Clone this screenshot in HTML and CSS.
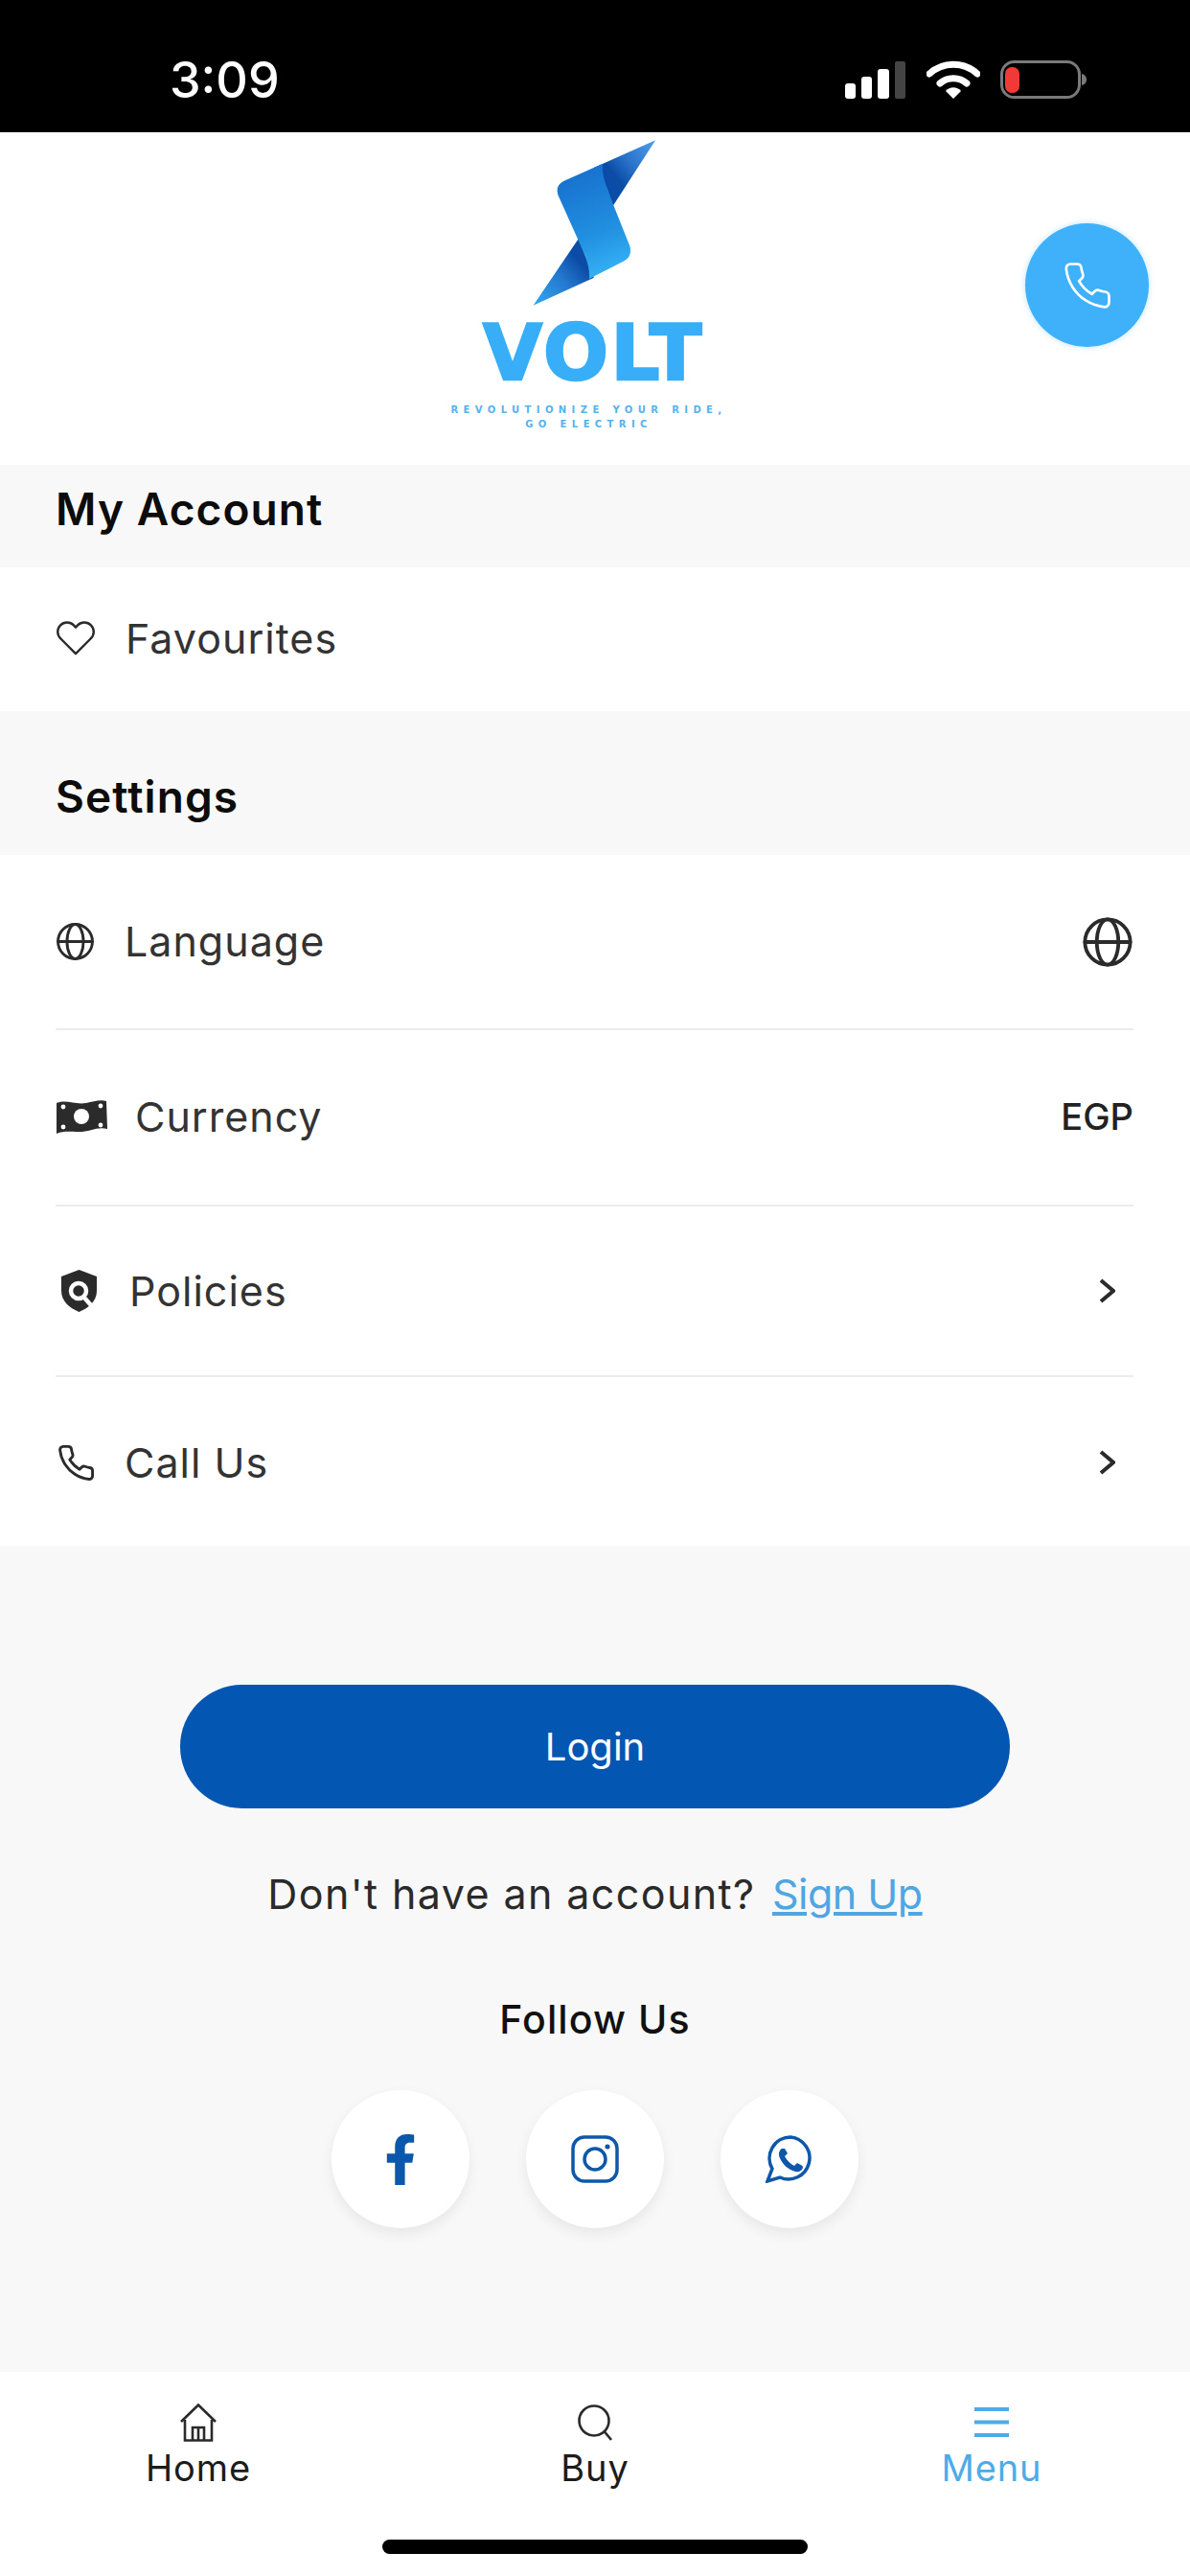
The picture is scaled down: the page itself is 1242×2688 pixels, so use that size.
FILE: index.html
```html
<!DOCTYPE html>
<html lang="en">
<head>
<meta charset="utf-8">
<title>Volt - Menu</title>
<link rel="stylesheet" href="styles.css">
</head>
<body>
<div class="app">
  <div class="status">
    <span class="time">3:09</span>
    <div class="status-icons">
      <svg class="ic-signal" viewBox="0 0 63 39"><rect x="0" y="23" width="11" height="16" rx="3" fill="#fff"/><rect x="17" y="16" width="11" height="23" rx="3" fill="#fff"/><rect x="34" y="8" width="12" height="31" rx="3" fill="#fff"/><rect x="52" y="0" width="11" height="39" rx="2" fill="#444"/></svg>
      <svg class="ic-wifi" viewBox="0 0 56 40"><path d="M3 14 C17 1 39 1 53 14" fill="none" stroke="#fff" stroke-width="7" stroke-linecap="round"/><path d="M14 24 C22 17 34 17 42 24" fill="none" stroke="#fff" stroke-width="7" stroke-linecap="round"/><path d="M20 32 C24 27 32 27 36 32 L28 40 Z" fill="#fff"/></svg>
      <svg class="ic-battery" viewBox="0 0 90 40"><rect x="1.5" y="1.5" width="81" height="37" rx="13" fill="none" stroke="#7a7a7a" stroke-width="3"/><rect x="5" y="7" width="15" height="27" rx="7" fill="#f03a35"/><path d="M85 14 C89 15 90 18 90 20 C90 22 89 25 85 26 Z" fill="#7a7a7a"/></svg>
    </div>
  </div>

  <header class="header">
    <div class="logo">
      <svg class="logo-mark" viewBox="340 40 410 540">
        <defs>
          <linearGradient id="wingTop" x1="733" y1="50" x2="585" y2="170" gradientUnits="userSpaceOnUse"><stop offset="0" stop-color="#4f9fe8"/><stop offset="0.55" stop-color="#2a74cc"/><stop offset="0.88" stop-color="#0b4da6"/><stop offset="1" stop-color="#0b4da6"/></linearGradient>
          <linearGradient id="wingBot" x1="350" y1="567" x2="520" y2="420" gradientUnits="userSpaceOnUse"><stop offset="0" stop-color="#34a8f2"/><stop offset="0.55" stop-color="#2478cf"/><stop offset="0.88" stop-color="#0b4da6"/><stop offset="1" stop-color="#0b4da6"/></linearGradient>
          <linearGradient id="band" x1="480" y1="170" x2="590" y2="460" gradientUnits="userSpaceOnUse"><stop offset="0" stop-color="#1874d0"/><stop offset="0.6" stop-color="#2190e0"/><stop offset="1" stop-color="#35b0f4"/></linearGradient>
        </defs>
        <path d="M540 136 L733 50 L600 255 L580 200 Z" fill="url(#wingTop)"/>
        <path d="M350 567 L492 358 L540 480 Z" fill="url(#wingBot)"/>
        <path d="M445 178 L568 123 C562 165 585 205 600 250 L652 380 Q662 412 635 428 L525 484 C530 440 505 395 490 360 L428 222 Q418 192 445 178 Z" fill="url(#band)"/>
      </svg>
      <div class="logo-name">VOLT</div>
      <div class="logo-tag">REVOLUTIONIZE YOUR RIDE,<br>GO ELECTRIC</div>
    </div>
    <button class="call-btn" type="button" aria-label="Call">
      <svg class="ic-call-white" viewBox="0 0 24 24"><path d="M22 16.92v3a2 2 0 0 1-2.18 2 19.79 19.79 0 0 1-8.63-3.07 19.5 19.5 0 0 1-6-6 19.79 19.79 0 0 1-3.07-8.67A2 2 0 0 1 4.11 2h3a2 2 0 0 1 2 1.72 12.84 12.84 0 0 0 .7 2.81 2 2 0 0 1-.45 2.11L8.09 9.91a16 16 0 0 0 6 6l1.27-1.27a2 2 0 0 1 2.11-.45 12.84 12.84 0 0 0 2.81.7A2 2 0 0 1 22 16.92z"/></svg>
    </button>
  </header>

  <h2 class="section-title title-account">My Account</h2>
  <div class="list">
    <div class="row row-fav">
      <svg class="ic-line ic-heart" viewBox="0 0 24 22"><path d="M21.2 3.1a5.6 5.6 0 0 0-8 0L12 4.4l-1.2-1.3a5.6 5.6 0 0 0-8 8l1.2 1.2 8 8 8-8 1.2-1.2a5.6 5.6 0 0 0 0-8z"/></svg>
      <span class="row-label gap-fav">Favourites</span>
    </div>
  </div>

  <h2 class="section-title title-settings">Settings</h2>
  <div class="list">
    <div class="row row-lang">
      <svg class="ic-line ic-globe" viewBox="0 0 24 24"><circle cx="12" cy="12" r="10.5"/><path d="M1.5 12h21"/><ellipse cx="12" cy="12" rx="5" ry="10.5"/></svg>
      <span class="row-label gap-lang">Language</span>
      <svg class="ic-line ic-globe-lg" viewBox="0 0 24 24"><circle cx="12" cy="12" r="10.5"/><path d="M1.5 12h21"/><ellipse cx="12" cy="12" rx="5" ry="10.5"/></svg>
    </div>
    <div class="row row-cur">
      <svg class="ic-cash" viewBox="0 0 54 37"><path d="M1 4 C12 0 20 6 32 4 C40 2 47 0 53 2 L54 31 C44 28 36 34 24 34 C14 34 8 33 1 36 Z" fill="#2b2b2b"/><circle cx="27" cy="18" r="8" fill="#fff"/><circle cx="8" cy="8" r="2.4" fill="#fff"/><circle cx="47" cy="7" r="2.4" fill="#fff"/><circle cx="8" cy="29" r="2.4" fill="#fff"/><circle cx="47" cy="27" r="2.4" fill="#fff"/></svg>
      <span class="row-label gap-cur">Currency</span>
      <span class="row-value">EGP</span>
    </div>
    <div class="row row-pol">
      <svg class="ic-shield" viewBox="0 0 39 44"><path d="M19.5 0 L38 7 L38 22 C38 33 29 40 19.5 44 C10 40 1 33 1 22 L1 7 Z" fill="#2b2b2b"/><circle cx="19" cy="22" r="8" fill="none" stroke="#fff" stroke-width="4.5"/><path d="M24 28 L32 37" stroke="#fff" stroke-width="4.5"/></svg>
      <span class="row-label gap-pol">Policies</span>
      <svg class="ic-chev" viewBox="0 0 17 26"><path d="M2 2 L15 13 L2 24"/></svg>
    </div>
    <div class="row row-call">
      <svg class="ic-line ic-phone" viewBox="0 0 24 24"><path d="M22 16.92v3a2 2 0 0 1-2.18 2 19.79 19.79 0 0 1-8.63-3.07 19.5 19.5 0 0 1-6-6 19.79 19.79 0 0 1-3.07-8.67A2 2 0 0 1 4.11 2h3a2 2 0 0 1 2 1.72 12.84 12.84 0 0 0 .7 2.81 2 2 0 0 1-.45 2.11L8.09 9.91a16 16 0 0 0 6 6l1.27-1.27a2 2 0 0 1 2.11-.45 12.84 12.84 0 0 0 2.81.7A2 2 0 0 1 22 16.92z"/></svg>
      <span class="row-label gap-call">Call Us</span>
      <svg class="ic-chev" viewBox="0 0 17 26"><path d="M2 2 L15 13 L2 24"/></svg>
    </div>
  </div>

  <main class="footer">
    <button class="login" type="button">Login</button>
    <p class="signup">Don't have an account? <a class="signup-link" href="#">Sign Up</a></p>
    <h3 class="follow">Follow Us</h3>
    <div class="socials">
      <div class="social">
        <svg class="ic-fb" viewBox="20 0 280 512"><path d="M279.14 288l14.22-92.66h-88.91v-60.13c0-25.35 12.42-50.06 52.24-50.06h40.42V6.26S260.43 0 225.36 0c-73.22 0-121.08 44.38-121.08 124.72v70.62H22.89V288h81.39v224h100.17V288z"/></svg>
      </div>
      <div class="social">
        <svg class="ic-social" viewBox="0 0 50 50"><rect x="2" y="2" width="46" height="46" rx="12"/><circle cx="25" cy="25" r="11"/><circle class="dot" cx="38" cy="12" r="2.6"/></svg>
      </div>
      <div class="social">
        <svg class="ic-social" viewBox="0 0 50 50"><path d="M26 2 A22 22 0 0 0 7 35 L2 48 L15 44 A22 22 0 1 0 26 2 Z"/><path class="dot" d="M17 14 C14 16 13 20 15 24 C18 31 24 36 31 38 C35 39 38 37 39 34 L38.5 32 L33 29 L30 32 C26 30 22 26 20 22 L23 19 L20 14 Z"/></svg>
      </div>
    </div>
  </main>

  <nav class="nav">
    <div class="tabs">
      <div class="tab">
        <svg class="tab-icon" viewBox="0 0 38 40"><path d="M1 19 L19 1.5 L37 19 M5 17 V38.5 H33 V17 M13 38.5 V25 H25 V38.5 M19 25 V38.5"/></svg>
        <span class="tab-label">Home</span>
      </div>
      <div class="tab">
        <svg class="tab-icon" viewBox="0 0 38 40"><circle cx="18" cy="18" r="15.5"/><path d="M29 29.5 L36 38"/></svg>
        <span class="tab-label">Buy</span>
      </div>
      <div class="tab tab-active">
        <svg class="tab-icon" viewBox="0 0 38 40"><path d="M1 6 H37 M1 19.5 H37 M1 33 H37"/></svg>
        <span class="tab-label">Menu</span>
      </div>
    </div>
    <div class="home-bar"></div>
  </nav>
</div>
</body>
</html>
```

FILE: styles.css
```css
* { box-sizing: border-box; }
html, body { margin: 0; padding: 0; }
body { background: #f8f8f8; font-family: Inter, "Noto Sans", "Liberation Sans", sans-serif; color: #2e2e2e; }
.app { width: 1242px; height: 2688px; display: flex; flex-direction: column; overflow: hidden; background: #f8f8f8; }

.status { height: 138px; flex: none; background: #000; display: flex; align-items: center; padding: 0 108px 0 177px; justify-content: space-between; }
.time { color: #fff; font-size: 52px; font-weight: 500; line-height: 1; margin-top: 30px; }
.status-icons { display: flex; align-items: flex-end; margin-top: 28px; }
.ic-signal { width: 63px; height: 39px; display: block; }
.ic-wifi { width: 56px; height: 40px; display: block; margin-left: 22px; }
.ic-battery { width: 90px; height: 40px; display: block; margin-left: 21px; }

.header { height: 347px; flex: none; background: #fff; display: flex; padding: 5px 43px 0 470px; }
.logo { width: 283px; display: flex; flex-direction: column; align-items: center; }
.logo-mark { width: 137px; height: 180px; display: block; margin-left: 20px; flex: none; }
.logo-name { font-family: "DejaVu Sans", sans-serif; font-weight: 700; font-size: 80px; letter-spacing: 2.5px; line-height: 57px; height: 57px; margin-top: 17px; margin-left: 16px; color: #38aef8; -webkit-text-stroke: 2.5px #38aef8; white-space: nowrap; }
.logo-tag { font-family: "DejaVu Sans", sans-serif; font-weight: 700; font-size: 10px; line-height: 15px; letter-spacing: 5.4px; text-align: center; color: #55b3ee; white-space: nowrap; margin-top: 23px; margin-left: 6px; }
.call-btn { width: 129px; height: 129px; border: 0; padding: 0; border-radius: 50%; background: #3fb0fa; display: flex; align-items: center; justify-content: center; margin: 90px 0 0 auto; box-shadow: 0 0 6px rgba(63,176,250,.35); }
.ic-call-white { width: 54px; height: 54px; fill: none; stroke: #fff; stroke-width: 1.2; }

.section-title { margin: 0; padding: 0 58px; font-size: 46px; font-weight: 600; color: #0c0c0c; line-height: 54px; flex: none; letter-spacing: 1.1px; }
.title-account { padding-top: 19px; padding-bottom: 34px; }
.title-settings { padding-top: 62px; padding-bottom: 34px; }

.list { background: #fff; padding: 0 59px 0 58px; flex: none; }
.row { display: flex; align-items: center; border-bottom: 2px solid #ececec; }
.row:last-child { border-bottom: 0; }
.row-fav { height: 150px; padding-bottom: 2px; }
.row-lang { height: 183px; }
.row-cur { height: 184px; padding-bottom: 2px; }
.row-pol { height: 178px; }
.row-call { height: 176px; padding-top: 2px; }
.row-label { font-size: 43px; color: #333; line-height: 1; letter-spacing: 1px; }
.gap-fav { margin-left: 31px; }
.gap-lang { margin-left: 31px; }
.gap-cur { margin-left: 29px; }
.gap-pol { margin-left: 33px; }
.gap-call { margin-left: 30px; }
.row-value { margin-left: auto; font-size: 38px; font-weight: 500; color: #222; }

.ic-line { fill: none; stroke: #2b2b2b; stroke-width: 1.7; display: block; flex: none; stroke-linejoin: round; stroke-linecap: round; }
.ic-heart { width: 42px; height: 38px; stroke-width: 1.4; }
.ic-globe { width: 41px; height: 41px; }
.ic-globe-lg { width: 54px; height: 54px; margin-left: auto; stroke-width: 1.7; }
.ic-phone { width: 41px; height: 41px; margin-left: 1px; }
.ic-cash { width: 54px; height: 37px; display: block; flex: none; }
.ic-shield { width: 39px; height: 44px; display: block; flex: none; margin-left: 5px; }
.ic-chev { width: 17px; height: 26px; display: block; flex: none; margin-left: auto; margin-right: 19px; fill: none; stroke: #2b2b2b; stroke-width: 4; }

.footer { flex: 1; display: flex; flex-direction: column; align-items: center; padding-top: 145px; background: #f8f8f8; }
.login { width: 866px; height: 129px; border: 0; border-radius: 65px; background: #0357b2; color: #fff; font-family: inherit; font-size: 40px; font-weight: 400; flex: none; }
.signup { margin: 62px 0 0; font-size: 43px; line-height: 54px; color: #2a2a2a; letter-spacing: 1.4px; white-space: nowrap; }
.signup-link { color: #4fa6e2; margin-left: 4px; letter-spacing: -0.5px; }
.follow { margin: 79px 0 0; font-size: 41px; font-weight: 500; line-height: 50px; color: #111; letter-spacing: 1.1px; }
.socials { display: flex; gap: 59px; margin-top: 49px; }
.social { width: 144px; height: 144px; border-radius: 50%; background: #fff; box-shadow: 0 6px 14px rgba(0,0,0,.07); display: flex; align-items: center; justify-content: center; }
.ic-fb { width: 30px; height: 53px; fill: #0a57ad; display: block; }
.ic-social { width: 50px; height: 50px; display: block; fill: none; stroke: #0f57a8; stroke-width: 3.5; }
.ic-social .dot { fill: #0f57a8; stroke: none; }

.nav { height: 213px; flex: none; background: #fff; display: flex; flex-direction: column; padding-top: 33px; }
.tabs { display: grid; grid-template-columns: repeat(3, 1fr); }
.tab { display: flex; flex-direction: column; align-items: center; color: #1c1c1c; }
.tab-icon { width: 38px; height: 40px; display: block; fill: none; stroke: #2a2a2a; stroke-width: 2.6; }
.tab-label { font-size: 38px; line-height: 46px; margin-top: 4px; letter-spacing: 0.9px; }
.tab-active { color: #4fabe8; }
.tab-active .tab-icon { stroke: #4fabe8; stroke-width: 4; }
.home-bar { width: 444px; height: 15px; border-radius: 8px; background: #000; margin: auto auto 23px; }
```
